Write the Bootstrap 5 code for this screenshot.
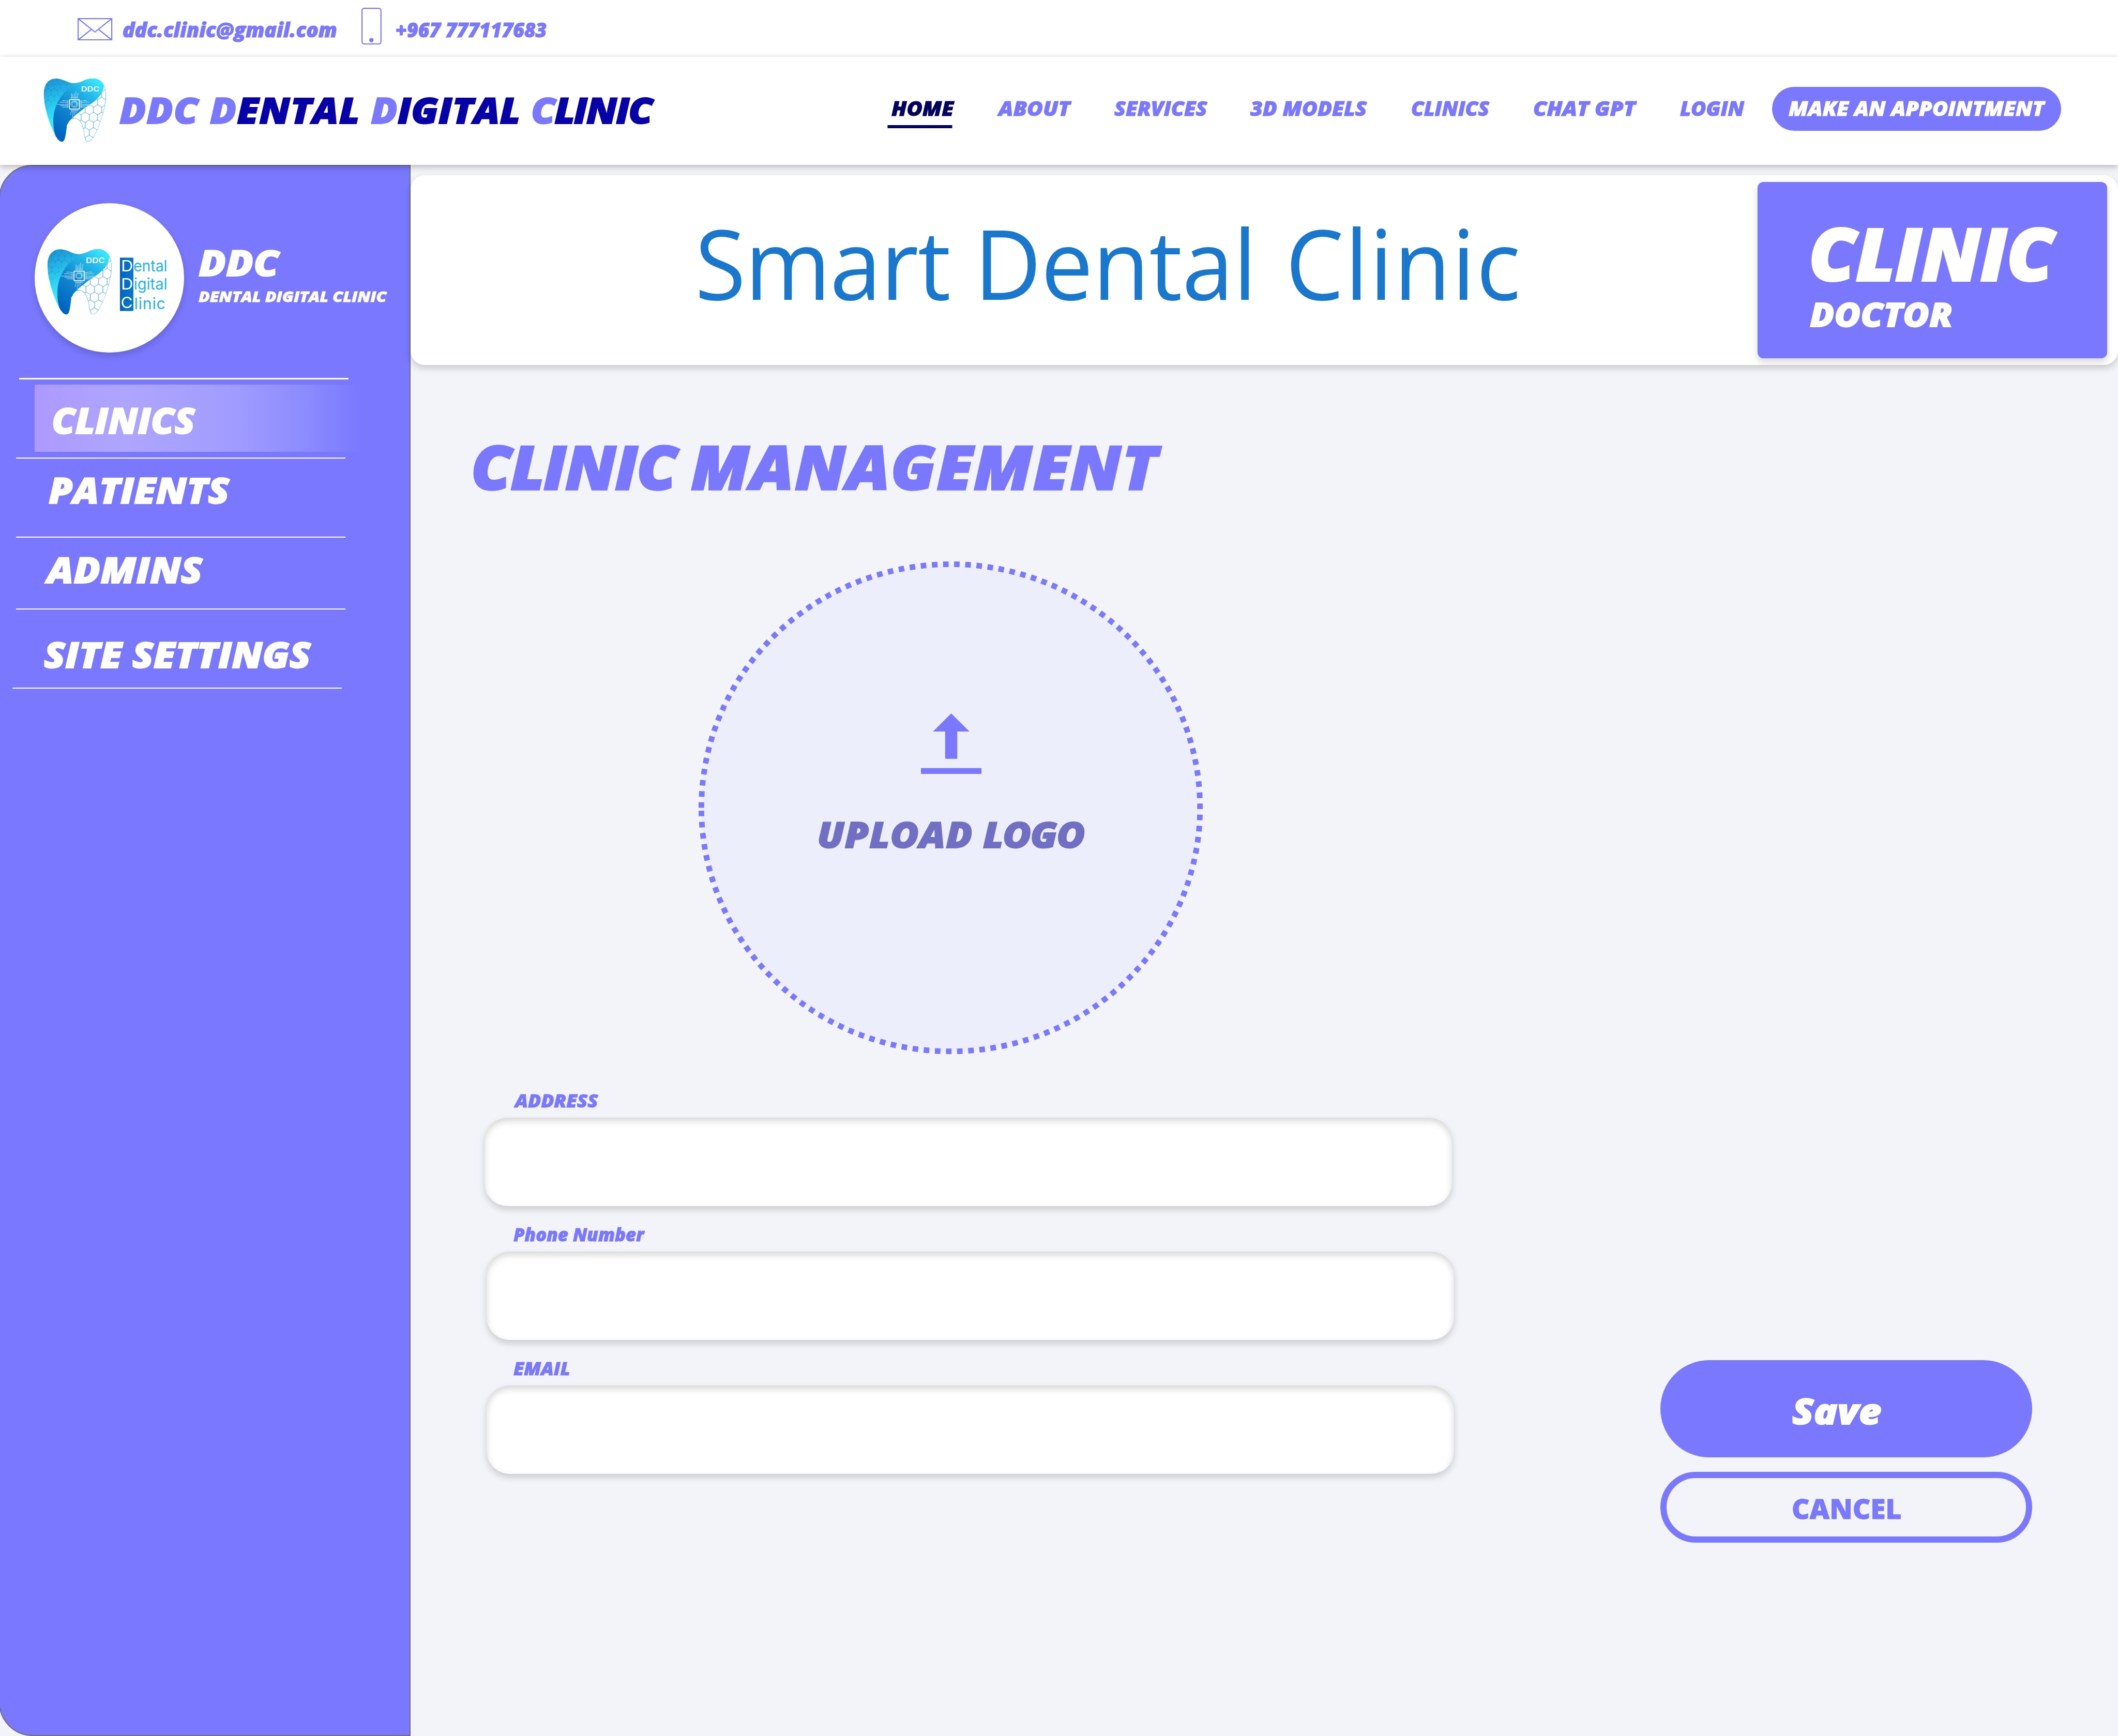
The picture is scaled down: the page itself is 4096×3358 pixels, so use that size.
<!DOCTYPE html>
<html lang="en">
<head>
<meta charset="utf-8">
<meta name="viewport" content="width=device-width, initial-scale=1">
<title>DDC Dental Digital Clinic - Clinic Management</title>
<link href="https://cdn.jsdelivr.net/npm/bootstrap@5.3.0/dist/css/bootstrap.min.css" rel="stylesheet">
<style>
/* 1rem = 100 design units of a 5694-unit-wide canvas */
html { font-size: calc(100vw / 56.94); }
body { background: #f3f4f9; font-family: "Open Sans", "Noto Sans", sans-serif; overflow: hidden; }
:root { --violet: #7978ff; --navy: #03005f; --drop: 0 .09rem .18rem rgba(0,0,0,.16); }
.page { height: 100vh; }
.blk { display: block; font-weight: 800; font-style: italic; line-height: 1; white-space: nowrap; text-decoration: none;
  transform: scaleX(var(--sx, 1.08)); transform-origin: 0 50%; -webkit-text-stroke: .028em currentColor; }
.t-nav { font-size: .532rem; }
.t-lg { font-size: .966rem; }
.violet { color: var(--violet); }
.w-loose { letter-spacing: .012em; }
.w-tight { letter-spacing: -.03em; }

.contact-bar { height: 1.53rem; padding-left: 2.09rem; }
.mail-icon { width: .934rem; height: .6rem; margin-top: .48rem; }
.mail-text { --sx: 1.022; width: 6.43rem; margin: .523rem 0 0 .266rem; }
.phone-icon { width: .54rem; height: .99rem; margin-top: .21rem; }
.phone-text { --sx: .979; margin: .523rem 0 0 .37rem; }

.site-header { height: 2.91rem; z-index: 3; box-shadow: var(--drop), 0 .02rem .14rem rgba(0,0,0,.14); padding-left: 1.173rem; }
.brand-tooth { width: 1.7rem; height: 1.733rem; margin-top: .563rem; }
.brand-name { --sx: 1.082; color: #0700a8; margin: .942rem 0 0 .332rem; width: 20.763rem; word-spacing: .02em; }
.main-nav { margin-top: 1.118rem; }
.main-nav .blk { color: var(--violet); }
.main-nav .blk.active { color: var(--navy); }
.n-home { --sx: 1.078; width: 2.87rem; }
.n-home.active::after { content: ""; position: absolute; left: -.103rem; top: .712rem; width: 1.619rem; height: .09rem; background: var(--navy); }
.n-about { --sx: 1.098; width: 3.114rem; }
.n-services { --sx: 1.05; width: 3.662rem; }
.n-models { --sx: 1.072; width: 4.32rem; }
.n-clinics { --sx: 1.031; width: 3.282rem; }
.n-chat { --sx: 1.1; width: 3.954rem; }
.n-login { --sx: 1.045; width: 2.468rem; }
.book-btn { --sx: 1.08; width: 7.77rem; height: 1.171rem; margin-top: .81rem; padding: .308rem 0 0 .445rem; background: var(--violet); }

.side-panel { width: 11.07rem; margin-left: -.03rem; border: .03rem solid #707070; border-radius: .9rem 0 0 .9rem; background: var(--violet); color: #fff; }
.profile { padding: .99rem 0 0 .93rem; }
.avatar { width: 4.02rem; height: 4.02rem; box-shadow: var(--drop); }
.profile-text { margin: 1.122rem 0 0 .389rem; }
.profile-name { --sx: 1.117; }
.profile-sub { --sx: 1.1; font-size: .402rem; margin-top: .229rem; }
.side-rule { width: 8.85rem; height: .03rem; background: #fff; margin-left: .433rem; }
.side-rule.first { margin: .69rem 0 .15rem .52rem; }
.side-rule.last { margin-left: .337rem; }
.side-link { color: #fff; }
.side-link.current { width: 8.9rem; height: 1.8rem; margin: 0 0 .15rem .93rem; padding: .464rem 0 0 .46rem;
  background: linear-gradient(90deg, #ad99ff 0, #aea5ff 27%, #a09cff 60%, #8c8bff 82%, #7978ff 99%); }
.s-patients { height: 2.1rem; padding: .372rem 0 0 1.31rem; }
.s-admins { height: 1.905rem; padding: .372rem 0 0 1.274rem; }
.s-settings { height: 2.1rem; padding: .717rem 0 0 1.184rem; }

.hero { height: 5.1rem; margin-top: .27rem; border-radius: .38rem; box-shadow: var(--drop); }
.hero-title { display: block; color: #1a77ce; font-size: 2.588rem; font-weight: 400; line-height: 1; white-space: nowrap;
  transform: scaleX(.962); transform-origin: 0 50%; margin: 1.063rem 0 0 7.64rem; }
.hero-title .h1w { letter-spacing: -.008em; }
.hero-title .h2w { letter-spacing: -.003em; margin-right: .056em; }
.hero-title .h3w { letter-spacing: .012em; }
.role-card { width: 9.393rem; height: 4.74rem; margin: .18rem .297rem 0 auto; padding: .945rem 0 0 1.37rem; border-radius: .16rem; background: var(--violet); color: #fff; box-shadow: var(--drop); }
.role-card .r1 { --sx: 1.034; font-size: 1.94rem; }
.role-card .r2 { --sx: 1.086; font-size: .886rem; margin: .231rem 0 0 .034rem; }

.page-title { --sx: 1.061; font-size: 1.628rem; margin: 1.914rem 0 0 1.62rem; word-spacing: -.03em; }
.page-title .p1 { letter-spacing: -.015em; }
.page-title .p2 { letter-spacing: .015em; }
.upload { width: 13.556rem; height: 13.25rem; margin: 1.74rem 0 0 7.744rem; padding-top: 4.088rem; }
.upload .ring { inset: 0; width: 100%; height: 100%; }
.upload-icon { width: 1.627rem; height: 1.627rem; margin-left: 5.979rem; }
.upload .blk { --sx: 1.08; color: #716fc3; margin: 1.139rem 0 0 3.175rem; }
.upload .u2 { letter-spacing: -.022em; }

.fields { width: 28.046rem; padding-top: 1.022rem; }
.field-label { font-size: .48rem; margin: 0 0 .215rem 2.76rem; }
.field-label.l1 { --sx: 1.068; margin-left: 2.8rem; }
.field-label.l2 { --sx: 1.005; }
.field-label.l3 { --sx: 1.05; }
.fields .form-control { width: 26.008rem; height: 2.37rem; margin: 0 0 .535rem 2.038rem; border: 0; border-radius: .62rem; background: #fff; font-size: .8rem; padding: 0 .6rem;
  box-shadow: var(--drop), inset 0 .09rem .18rem rgba(0,0,0,.16); }
.fields .form-control.f1 { margin-left: 1.982rem; }
.actions { width: 9.99rem; margin: 8.23rem 0 0 5.554rem; }
.actions .btn { width: 100%; }
.save-btn, .save-btn:hover { height: 2.611rem; padding: .874rem 0 0 3.544rem; background: var(--violet); color: #fff; border: 0; }
.save-btn .blk { --sx: 1.09; }
.cancel-btn { height: 1.915rem; margin-top: .39rem; border: .177rem solid var(--violet); padding: .446rem 0 0 3.365rem; }
.cancel-btn .blk { --sx: .995; font-style: normal; font-size: .745rem; color: var(--violet); -webkit-text-stroke-width: .015em; }
</style>
</head>
<body>
<!-- shared tooth emblem -->
<svg width="0" height="0" class="position-absolute" aria-hidden="true">
  <defs>
    <linearGradient id="gBack" gradientUnits="userSpaceOnUse" x1="150" y1="130" x2="250" y2="420">
      <stop offset="0" stop-color="#1c9bd9"/><stop offset=".5" stop-color="#28c4ec"/><stop offset="1" stop-color="#35e8ff"/>
    </linearGradient>
    <linearGradient id="gFront" gradientUnits="userSpaceOnUse" x1="235" y1="550" x2="560" y2="130">
      <stop offset="0" stop-color="#0064c0"/><stop offset=".45" stop-color="#128bd2"/><stop offset=".75" stop-color="#22b6e8"/><stop offset="1" stop-color="#36e6ff"/>
    </linearGradient>
    <linearGradient id="gLine" x1="0" y1="0" x2="1" y2="1">
      <stop offset="0" stop-color="#2a86cf"/><stop offset="1" stop-color="#6fe6fb"/>
    </linearGradient>
    <linearGradient id="gChip" x1="0" y1="1" x2="1" y2="0">
      <stop offset="0" stop-color="#0a72c8"/><stop offset="1" stop-color="#2cc4ee"/>
    </linearGradient>
    <linearGradient id="gFade" gradientUnits="userSpaceOnUse" x1="140" y1="150" x2="270" y2="290">
      <stop offset="0" stop-color="#fff"/><stop offset=".5" stop-color="#fff" stop-opacity=".7"/><stop offset=".85" stop-color="#fff" stop-opacity="0"/>
    </linearGradient>
    <mask id="mFade" maskUnits="userSpaceOnUse" x="100" y="80" width="250" height="300"><rect x="100" y="80" width="250" height="300" fill="url(#gFade)"/></mask>
    <pattern id="hexR" patternUnits="userSpaceOnUse" width="66" height="123" patternTransform="translate(416 364)">
      <path d="M0 20.500V61.500L33 82L66 61.500V20.500L33 0L0 20.500M33 82V123" fill="none" stroke="#2286cf" stroke-width="3.400"/>
      <g fill="#5cc4ee"><circle cx="0" cy="61.500" r="4"/><circle cx="66" cy="61.500" r="4"/><circle cx="33" cy="82" r="4"/><circle cx="0" cy="20.500" r="4"/><circle cx="66" cy="20.500" r="4"/><circle cx="33" cy="0" r="4"/><circle cx="33" cy="123" r="4"/></g>
    </pattern>
    <pattern id="hexL" patternUnits="userSpaceOnUse" width="51" height="92" patternTransform="translate(148.500 127)">
      <path d="M0 15.500V46L25.500 61.500L51 46V15.500L25.500 0L0 15.500M25.500 61.500V92" fill="none" stroke="#1379c8" stroke-width="2"/>
      <g fill="#0f63bb"><circle cx="0" cy="46" r="3"/><circle cx="51" cy="46" r="3"/><circle cx="25.500" cy="61.500" r="3"/><circle cx="0" cy="15.500" r="3"/><circle cx="51" cy="15.500" r="3"/></g>
    </pattern>
    <clipPath id="cTooth"><path d="M365 130C420 128 445 91 512 91C580 91 617 150 617 225C617 330 565 480 520 560C500 592 482 602 468 602C447 602 442 550 436 515C426 462 405 414 362 414C318 414 303 462 296 515C289 570 281 602 262 602C240 602 222 575 212 558C165 470 115 330 115 215C115 140 150 92 215 92C275 92 310 132 365 130Z"/></clipPath>
  </defs>
  <symbol id="tooth" viewBox="112 88 510 520">
    <g clip-path="url(#cTooth)">
      <rect x="330" y="88" width="290" height="520" fill="url(#hexR)"/>
      <path d="M365 130C420 128 445 91 512 91C580 91 617 150 617 225C617 330 565 480 520 560C500 592 482 602 468 602C447 602 442 550 436 515C426 462 405 414 362 414C340 414 330 422 322 434" fill="none" stroke="url(#gLine)" stroke-width="6"/>
      <path d="M110 85H400V135C300 180 200 280 215 565L110 560Z" fill="url(#gBack)"/>
      <rect x="110" y="88" width="210" height="260" fill="url(#hexL)" mask="url(#mFade)"/>
      <path d="M390 85H604C608 150 592 195 568 230C520 290 470 310 420 348C390 372 348 400 325 432L300 470V610H205L214 570C175 455 190 350 232 275C268 205 330 145 398 121Z" fill="url(#gFront)"/>
    </g>
    <g stroke="#fff" fill="none" stroke-width="3" stroke-linejoin="round">
      <rect x="322" y="262" width="81" height="76" rx="8" stroke-width="7" fill="url(#gChip)"/>
      <rect x="343" y="280" width="38" height="35" stroke-width="3.500" fill="url(#gChip)"/>
      <path d="M349 271.500H377M349 324H377" stroke-width="4" stroke-dasharray="4 4"/>
      <path d="M334 286V312M390 286V312" stroke-width="4" stroke-dasharray="4 4"/>
      <path d="M338 243V212M350 243V226L346 218M362 243V212M374 243V197M386 243V230L391 222V208"/>
      <path d="M303 273H297L291 270H261M303 286H290L284 283H244M303 301H222M303 312H290L284 310H248M303 322H264"/>
      <path d="M420 273H427L433 270H464M420 286H434L440 283H480M420 301H496M420 312H434L440 310H477M420 322H460"/>
      <path d="M338 354V362L332 368V386M350 354V384M362 354V380L358 384M374 354V372M347 384V402"/>
    </g>
    <g fill="none" stroke="#fff" stroke-width="2.500">
      <circle cx="338" cy="247" r="4"/><circle cx="350" cy="247" r="4"/><circle cx="362" cy="247" r="4"/><circle cx="374" cy="247" r="4"/><circle cx="386" cy="247" r="4"/>
      <circle cx="308" cy="274" r="4"/><circle cx="308" cy="287" r="4"/><circle cx="308" cy="300" r="4"/><circle cx="308" cy="312" r="4"/><circle cx="308" cy="323" r="4"/>
      <circle cx="416" cy="274" r="4"/><circle cx="416" cy="287" r="4"/><circle cx="416" cy="300" r="4"/><circle cx="416" cy="312" r="4"/><circle cx="416" cy="323" r="4"/>
      <circle cx="338" cy="350" r="4"/><circle cx="350" cy="350" r="4"/><circle cx="362" cy="350" r="4"/><circle cx="374" cy="350" r="4"/><circle cx="386" cy="350" r="4"/>
    </g>
    <text x="415" y="198" font-family="Inter, sans-serif" font-weight="600" font-size="56" fill="#fff" textLength="148" lengthAdjust="spacingAndGlyphs">DDC</text>
  </symbol>
</svg>

<div class="page d-flex flex-column">
  <div class="contact-bar bg-white d-flex align-items-start flex-shrink-0">
    <svg class="mail-icon flex-shrink-0" viewBox="0 0 93.400 60" fill="none" stroke="#7978ff" stroke-width="3"><rect x="1.500" y="1.500" width="90.400" height="57"/><path d="M3 2.500L46.700 37.500L90.400 2.500M3 57.500L37.500 30M90.400 57.500L56 30"/></svg>
    <span class="blk t-nav violet mail-text flex-shrink-0">ddc.clinic@gmail.com</span>
    <svg class="phone-icon flex-shrink-0" viewBox="0 0 54 99"><rect x="1.500" y="1.500" width="51" height="96" rx="6" fill="none" stroke="#7978ff" stroke-width="3"/><circle cx="26.700" cy="87" r="5.800" fill="#7978ff"/></svg>
    <span class="blk t-nav violet phone-text">+967 777117683</span>
  </div>

  <header class="site-header bg-white position-relative d-flex align-items-start flex-shrink-0">
    <svg class="brand-tooth flex-shrink-0"><use href="#tooth"/></svg>
    <a class="blk t-lg brand-name flex-shrink-0"><span class="w-loose"><span class="violet">DDC D</span>ENTAL</span> <span class="violet">D</span>IGITAL <span class="w-tight"><span class="violet">C</span>LINIC</span></a>
    <nav class="main-nav d-flex flex-shrink-0">
      <a class="blk t-nav n-home active position-relative">HOME</a>
      <a class="blk t-nav n-about">ABOUT</a>
      <a class="blk t-nav n-services">SERVICES</a>
      <a class="blk t-nav n-models">3D MODELS</a>
      <a class="blk t-nav n-clinics">CLINICS</a>
      <a class="blk t-nav n-chat">CHAT GPT</a>
      <a class="blk t-nav n-login">LOGIN</a>
    </nav>
    <a class="book-btn rounded-pill text-white text-decoration-none flex-shrink-0"><span class="blk t-nav">MAKE AN APPOINTMENT</span></a>
  </header>

  <div class="d-flex flex-grow-1">
    <aside class="side-panel flex-shrink-0">
      <div class="profile d-flex align-items-start">
        <div class="avatar rounded-circle bg-white flex-shrink-0">
          <svg class="d-block w-100 h-100" viewBox="93 545.800 402 402">
            <defs><linearGradient id="gBar"><stop offset="0" stop-color="#0064c1"/><stop offset="1" stop-color="#0878cc"/></linearGradient></defs>
            <use href="#tooth" x="126.600" y="668.600" width="175.300" height="178.800"/>
            <rect x="322.300" y="692.300" width="36.200" height="143.400" fill="url(#gBar)"/>
            <g font-family="Inter, 'Liberation Sans', sans-serif" font-size="42">
              <g fill="#fff" font-weight="400">
                <text x="325" y="729.300" textLength="32.500" lengthAdjust="spacingAndGlyphs">D</text>
                <text x="325" y="778.500" textLength="32.500" lengthAdjust="spacingAndGlyphs">D</text>
                <text x="324.500" y="828.300" textLength="32" lengthAdjust="spacingAndGlyphs">C</text>
              </g>
              <g fill="#22b4e6" font-weight="400">
                <text x="358.500" y="729.300" textLength="91" lengthAdjust="spacingAndGlyphs">ental</text>
                <text x="359.500" y="778.500" textLength="90" lengthAdjust="spacingAndGlyphs">igital</text>
                <text x="360.500" y="830.600" textLength="84" lengthAdjust="spacing">linic</text>
              </g>
            </g>
          </svg>
        </div>
        <div class="profile-text">
          <span class="blk t-lg profile-name">DDC</span>
          <span class="blk profile-sub">DENTAL DIGITAL CLINIC</span>
        </div>
      </div>
      <div class="side-rule first"></div>
      <a class="side-link current d-block text-decoration-none"><span class="blk t-lg" style="--sx:1.041">CLINICS</span></a>
      <div class="side-rule"></div>
      <a class="side-link s-patients d-block text-decoration-none"><span class="blk t-lg">PATIENTS</span></a>
      <div class="side-rule"></div>
      <a class="side-link s-admins d-block text-decoration-none"><span class="blk t-lg" style="--sx:1.092">ADMINS</span></a>
      <div class="side-rule"></div>
      <a class="side-link s-settings d-block text-decoration-none"><span class="blk t-lg">SITE SETTINGS</span></a>
      <div class="side-rule last"></div>
    </aside>

    <main class="flex-grow-1">
      <section class="hero bg-white position-relative d-flex align-items-start">
        <span class="hero-title"><span class="h1w">Smart</span> <span class="h2w">Dental</span> <span class="h3w">Clinic</span></span>
        <div class="role-card flex-shrink-0">
          <span class="blk r1">CLINIC</span>
          <span class="blk r2">DOCTOR</span>
        </div>
      </section>

      <h1 class="blk violet page-title"><span class="p1">CLINIC</span> <span class="p2">MANAGEMENT</span></h1>

      <div class="upload position-relative">
        <svg class="ring position-absolute" viewBox="0 0 1355.600 1325"><path d="M7.500 662.500A670.300 655 0 0 1 1348.100 662.500A670.300 655 0 0 1 7.500 662.500Z" fill="#edeefc" stroke="#7978ff" stroke-width="15" stroke-dasharray="15 15"/></svg>
        <svg class="upload-icon d-block position-relative" viewBox="0 0 162.700 162.700" fill="#7978ff"><path d="M81.300 0L130.500 48.500H97.700V122H65V48.500H32.500Z"/><rect y="147" width="162.700" height="15.700"/></svg>
        <span class="blk t-lg position-relative"><span class="w-loose">UPLOAD</span> <span class="u2">LOGO</span></span>
      </div>

      <div class="d-flex align-items-start">
        <form class="fields flex-shrink-0">
          <label class="blk violet field-label l1" for="address">ADDRESS</label>
          <input class="form-control f1" id="address" type="text">
          <label class="blk violet field-label l2" for="phone">Phone Number</label>
          <input class="form-control" id="phone" type="text">
          <label class="blk violet field-label l3" for="email">EMAIL</label>
          <input class="form-control" id="email" type="text">
        </form>
        <div class="actions flex-shrink-0">
          <button type="button" class="btn save-btn rounded-pill d-flex align-items-start"><span class="blk t-lg">Save</span></button>
          <button type="button" class="btn cancel-btn rounded-pill d-flex align-items-start"><span class="blk">CANCEL</span></button>
        </div>
      </div>
    </main>
  </div>
</div>
<script src="https://cdn.jsdelivr.net/npm/bootstrap@5.3.0/dist/js/bootstrap.bundle.min.js"></script>
</body>
</html>
